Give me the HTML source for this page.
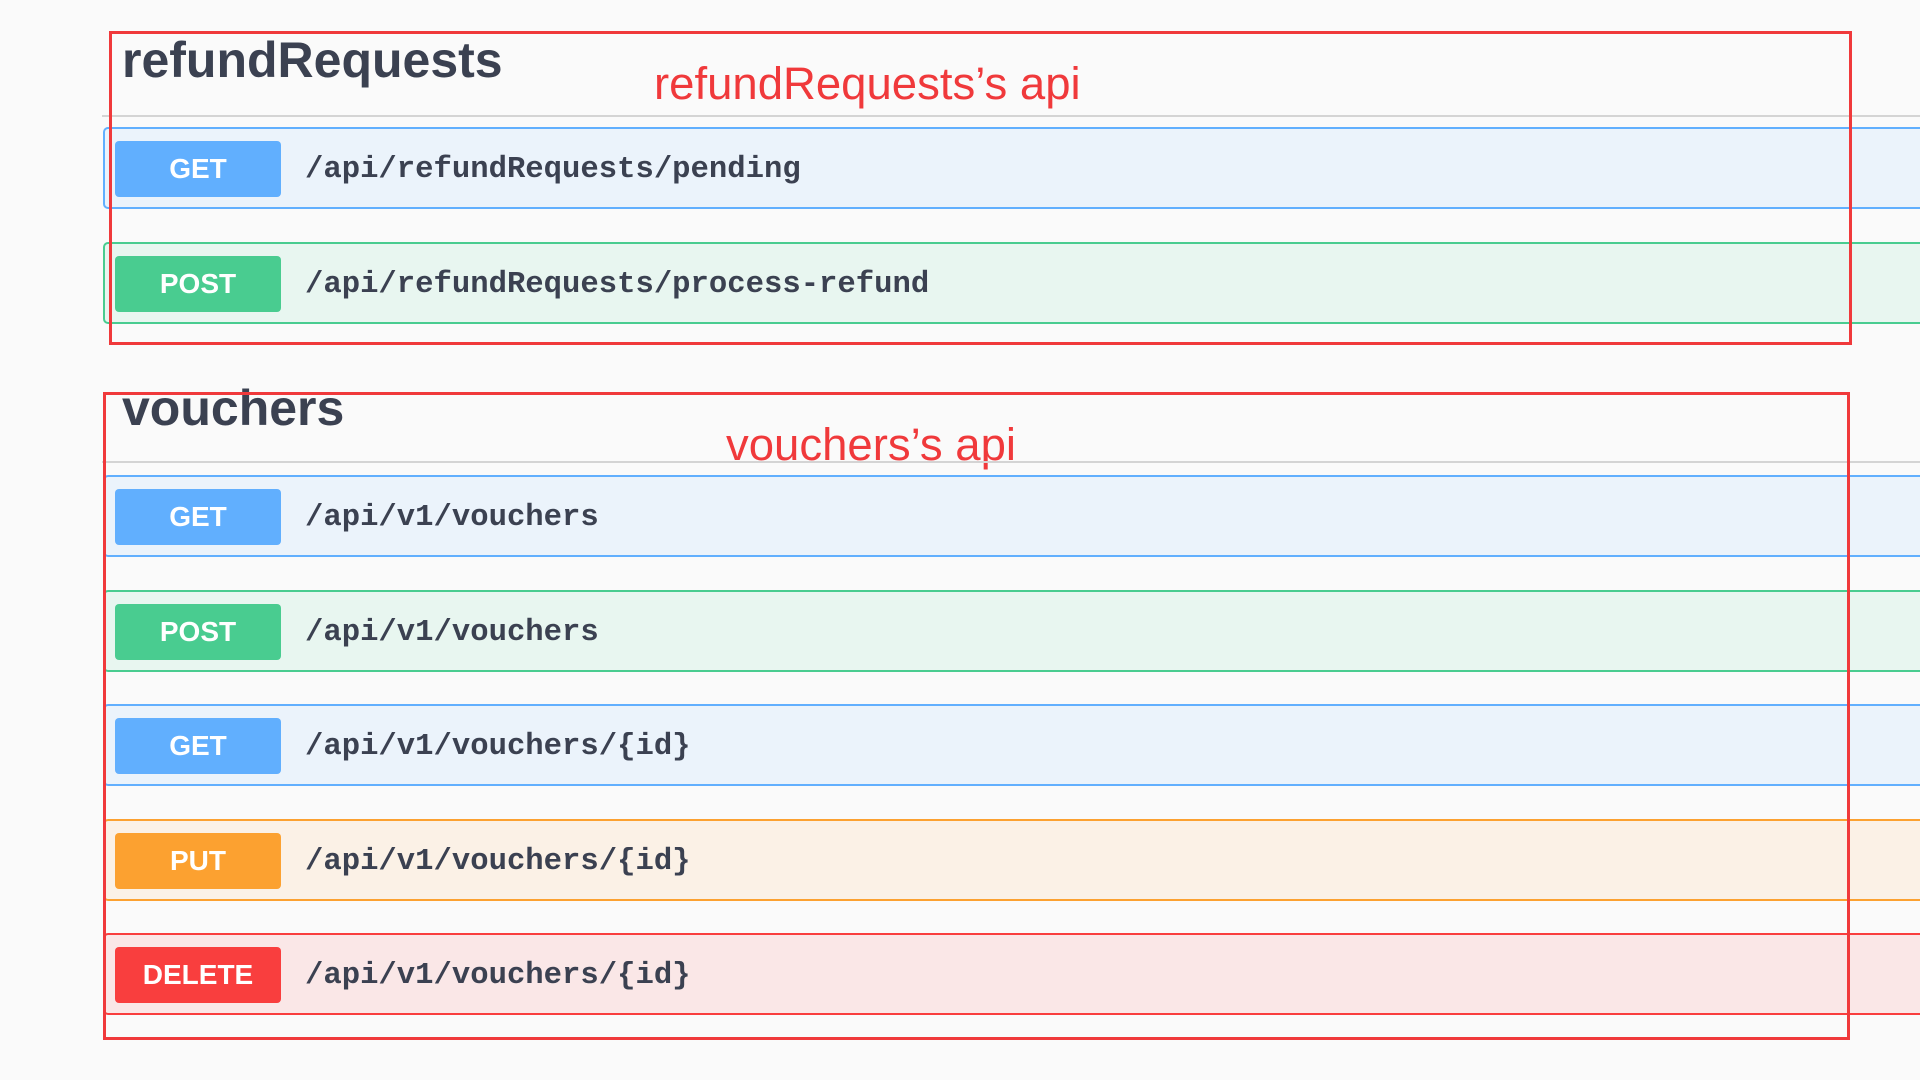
<!DOCTYPE html>
<html><head><meta charset="utf-8"><style>
body{margin:0;width:1920px;height:1080px;background:#fafafa;position:relative;overflow:hidden;font-family:"Liberation Sans",sans-serif}
.t{position:absolute;left:122px;font-weight:bold;font-size:50px;color:#3b4151;line-height:1}
.lbl{position:absolute;color:#f0393b;font-size:45.5px;line-height:1}
.sep{position:absolute;left:102px;right:0;height:2px;background:#d4d4d4}
.row{position:absolute;left:103px;right:-10px;height:82px;border:2px solid;border-radius:5px;box-sizing:border-box}
.b{position:absolute;left:10px;top:12px;width:166px;height:56px;border-radius:4px;color:#fff;font-weight:bold;font-size:28px;text-align:center;line-height:56px}
.p{position:absolute;left:200px;top:0;line-height:82px;font-family:"Liberation Mono",monospace;font-weight:bold;font-size:30.6px;color:#3b4151}
.get{background:#ebf3fb;border-color:#61affe}.get .b{background:#61affe}
.post{background:#e8f6f0;border-color:#49cc90}.post .b{background:#49cc90}
.put{background:#fbf1e6;border-color:#fca130}.put .b{background:#fca130}
.del{background:#fae7e7;border-color:#f93e3e}.del .b{background:#f93e3e}
.box{position:absolute;border:3px solid #f0393b;box-sizing:border-box}
</style></head><body>
<div class="t" style="top:35px">refundRequests</div>
<div class="lbl" style="left:654px;top:61px">refundRequests’s api</div>
<div class="sep" style="top:115px"></div>
<div class="row get" style="top:127px"><div class="b">GET</div><div class="p">/api/refundRequests/pending</div></div>
<div class="row post" style="top:242px"><div class="b">POST</div><div class="p">/api/refundRequests/process-refund</div></div>
<div class="box" style="left:109px;top:31px;width:1743px;height:314px"></div>

<div class="t" style="top:383px">vouchers</div>
<div class="lbl" style="left:726px;top:422px">vouchers’s api</div>
<div class="sep" style="top:461px"></div>
<div class="row get" style="top:475px"><div class="b">GET</div><div class="p">/api/v1/vouchers</div></div>
<div class="row post" style="top:590px"><div class="b">POST</div><div class="p">/api/v1/vouchers</div></div>
<div class="row get" style="top:704px"><div class="b">GET</div><div class="p">/api/v1/vouchers/{id}</div></div>
<div class="row put" style="top:819px"><div class="b">PUT</div><div class="p">/api/v1/vouchers/{id}</div></div>
<div class="row del" style="top:933px"><div class="b">DELETE</div><div class="p">/api/v1/vouchers/{id}</div></div>
<div class="box" style="left:103px;top:392px;width:1747px;height:648px"></div>
</body></html>
